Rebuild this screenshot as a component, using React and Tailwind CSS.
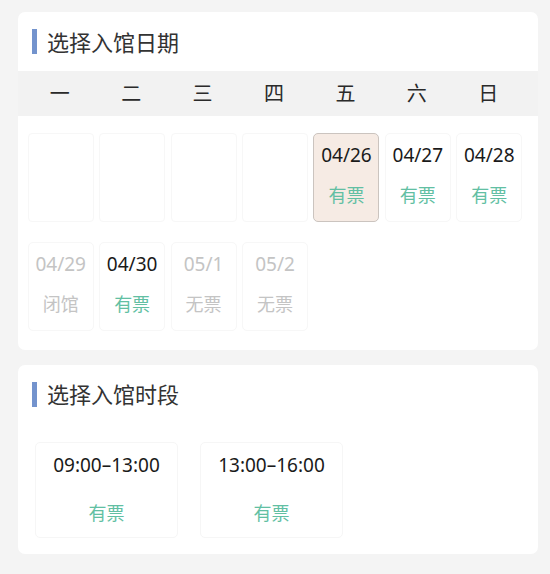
import React from "react";

const weekdays = ["一", "二", "三", "四", "五", "六", "日"];

const dates = [
  null, null, null, null,
  { d: "04/26", s: "有票", selected: true },
  { d: "04/27", s: "有票" },
  { d: "04/28", s: "有票" },
  { d: "04/29", s: "闭馆", off: true },
  { d: "04/30", s: "有票" },
  { d: "05/1", s: "无票", off: true },
  { d: "05/2", s: "无票", off: true },
];

const slots = ["09:00–13:00", "13:00–16:00"];

const Title = ({ text, className }) => (
  <div className={`flex items-center pl-[14px] ${className}`}>
    <span className="w-[5px] h-[25px] bg-[#7393cd]" />
    <span className="ml-[10px] text-[22px] text-[#333] leading-none">{text}</span>
  </div>
);

const DateCell = ({ item }) => {
  if (!item) {
    return <div className="w-[66px] h-[89px] mx-auto rounded-[4px] border border-[#f7f7f7] bg-white" />;
  }
  const cellStyle = item.selected
    ? "bg-[#f6ebe4] border-[#cbc4bf]"
    : "bg-white border-[#f7f7f7]";
  return (
    <div className={`w-[66px] h-[89px] mx-auto rounded-[5px] border flex flex-col items-center pt-[9px] ${cellStyle}`}>
      <div className={`h-[24px] leading-[24px] text-[19px] ${item.off ? "text-[#c4c4c4]" : "text-[#1a1a1a]"}`}>
        {item.d}
      </div>
      <div className={`mt-[16px] h-[24px] leading-[24px] text-[18px] ${item.off ? "text-[#c4c4c4]" : "text-[#62bfa3]"}`}>
        {item.s}
      </div>
    </div>
  );
};

export default function App() {
  return (
    <div
      className="min-h-[574px] bg-[#f4f4f4] pt-[12px] px-[18px] pb-[20px]"
      style={{ fontFamily: '"Noto Sans", "Noto Sans CJK SC", sans-serif' }}
    >
      <div className="w-[520px] bg-white rounded-[7px] pb-[19px]">
        <Title text="选择入馆日期" className="h-[59px]" />
        <div className="h-[45px] bg-[#f2f2f2] pl-[6px] pr-[14px] grid grid-cols-7 items-center">
          {weekdays.map((w) => (
            <div key={w} className="text-center text-[20px] text-[#2a2a2a] leading-none">{w}</div>
          ))}
        </div>
        <div className="mt-[17px] pl-[7px] pr-[13px] grid grid-cols-7 gap-y-[20px]">
          {dates.map((item, i) => (
            <DateCell key={i} item={item} />
          ))}
        </div>
      </div>

      <div className="w-[520px] mt-[15px] bg-white rounded-[7px] pb-[16px]">
        <Title text="选择入馆时段" className="h-[58px]" />
        <div className="mt-[19px] pl-[17px] flex gap-[22px]">
          {slots.map((t) => (
            <div key={t} className="w-[143px] h-[96px] rounded-[5px] border border-[#f6f6f6] flex flex-col items-center pt-[10px]">
              <div className="h-[24px] leading-[24px] text-[19px] text-[#1a1a1a]">{t}</div>
              <div className="mt-[24px] h-[24px] leading-[24px] text-[18px] text-[#62bfa3]">有票</div>
            </div>
          ))}
        </div>
      </div>
    </div>
  );
}
